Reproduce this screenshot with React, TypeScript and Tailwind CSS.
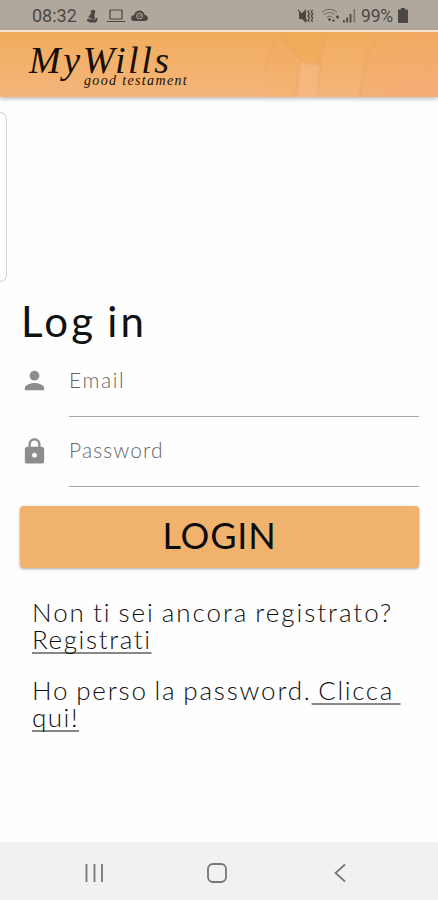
import React from 'react';
import { MdPerson, MdLock } from 'react-icons/md';

const App: React.FC = () => (
  <div className="w-full h-[900px] flex flex-col overflow-hidden bg-[#fefefe] font-['Lato','Open_Sans',sans-serif]">
    <StatusBar />
    <Header />

    <main className="flex-1 flex flex-col">
      {/* Edge panel handle */}
      <div className="mt-[15px] h-[170px] w-[7px] shrink-0 rounded-r-[7px] border border-l-0 border-[#d2d2d2]" />

      <form className="px-5 flex flex-col" onSubmit={(e) => e.preventDefault()}>
        <h1 className="mt-[14px] h-[66px] pl-px text-[42px] leading-[50px] tracking-[3.2px] [word-spacing:-3px] text-[#111] whitespace-nowrap">Log in</h1>

        <Field icon={<MdPerson size={29} />} label="Email" type="email" spacing="placeholder:tracking-[1.6px]" />
        <Field icon={<MdLock size={29} />} label="Password" type="password" spacing="placeholder:tracking-[1.1px]" />

        <button className="mt-[3px] mr-[-1px] h-[62px] rounded-[4px] bg-[#f1b26e] pb-[4px] text-[36px] leading-[58px] tracking-[0.8px] text-[#0c0c0c] shadow-[0_1px_3px_rgba(0,0,0,0.35)]">
          LOGIN
        </button>
      </form>

      <div className="pl-8 pt-[31px] font-light text-[26px] leading-[26.5px] text-[#111] [word-spacing:-2px] whitespace-nowrap">
        <p>
          <span className="tracking-[1.95px]">Non ti sei ancora registrato?</span>
          <br />
          <Link><span className="tracking-[1.6px]">Registrati</span></Link>
        </p>
        <p className="mt-[25px]">
          <span className="tracking-[1.8px]">Ho perso la password.</span>
          <Link><span className="tracking-[1.6px]">&nbsp;Clicca&nbsp;</span></Link>
          <br />
          <Link><span className="tracking-[1.5px]">qui!</span></Link>
        </p>
      </div>
    </main>

    <NavBar />
  </div>
);

const StatusBar: React.FC = () => (
  <div className="h-[30px] shrink-0 flex items-center bg-[#b0a89d] pl-8 pr-[30px] text-[#4b4743] font-['Roboto',sans-serif]">
    <span className="w-[45px] text-[18px] leading-[30px] pt-0.5">08:32</span>
    <svg className="ml-[9px] mt-0.5" width="13" height="15" viewBox="0 0 13 15" fill="currentColor">
      <circle cx="7" cy="3" r="2.3" />
      <path d="M5 4.5h3.500v3.500l1 1.500 2-1v3l-2 2H4l-3-1.500v-1.500l3-.5-2-1.500z" />
      <path d="M3 8.500l3 2M7.500 10.500l2-1" stroke="#b0a89d" strokeWidth="0.9" />
    </svg>
    <svg className="ml-2 mt-0.5" width="18" height="14" viewBox="0 0 18 14" fill="none" stroke="currentColor" strokeWidth="1.2">
      <path d="M3 1h12v9H3zM0 12.5h18" />
    </svg>
    <svg className="ml-[6px] mt-0.5" width="17" height="12" viewBox="0 0 17 12" fill="currentColor">
      <path d="M3.2 5C3.8 2 6 .5 8.5.5S13.2 2 13.7 5C15.5 5.2 17 6.4 17 8.2 17 10 15.5 11 14 11H3C1.4 11 0 10 0 8.2 0 6.5 1.4 5.2 3.2 5z" />
      <circle cx="8.5" cy="6" r="2.9" fill="none" stroke="#b0a89d" />
      <path d="M7 5.5l1.4 1.2L10.5 4" fill="none" stroke="#b0a89d" strokeWidth="0.8" />
    </svg>

    <div className="ml-auto flex items-center">
      <svg className="mt-px mr-[2px]" width="16" height="16" viewBox="0 0 16 16" fill="currentColor">
        <path d="M1 5h3l4-4v14l-4-4H1z" />
        <path d="M0 2l9 11" stroke="currentColor" strokeWidth="1.4" />
        <path d="M11.2 2l-1.3 2 1.6 2-1.6 2 1.6 2-1.3 2 1 2M14.5 2l-1.3 2 1.6 2-1.6 2 1.6 2-1.3 2 1 2" fill="none" stroke="currentColor" strokeWidth="1.3" />
      </svg>
      <svg className="ml-[5px] mt-px" width="19" height="15" viewBox="0 0 19 15" fill="none" stroke="currentColor">
        <g strokeWidth="0.9" opacity="0.75">
          <path d="M1 4.5C5 .3 12 .3 16 4.5M3 7c3-3.2 8-3.2 11 0M5.5 9.5c2-1.8 4-1.8 6 0" />
        </g>
        <circle cx="8.5" cy="11.5" r="0.9" fill="currentColor" />
        <path d="M11 12l1.500 1.700L14 12zM15 9l1.500-1.700L18 9l-1.500 1.700z" fill="currentColor" strokeWidth="0.5" />
      </svg>
      <svg className="ml-[3px] mt-px" width="13" height="15" viewBox="0 0 13 15" fill="currentColor">
        <path d="M0 12h1.800v2.500H0zM3.300 9.500h1.800v5H3.300zM6.600 6h1.800v8.500H6.600z" />
        <path d="M10.5 1h1.600v13.500h-1.600z" opacity="0.55" />
      </svg>
      <span className="ml-[5px] pt-0.5 w-[34px] text-[17.5px] leading-[28px] tracking-[-0.2px] whitespace-nowrap">99%</span>
      <svg className="ml-[3px] mt-px" width="10" height="15" viewBox="0 0 10 15" fill="currentColor">
        <path d="M3 0h4v1.500h2.300l.7.700V14.300l-.7.700H.7l-.7-.7V2.200l.7-.7H3z" />
      </svg>
    </div>
  </div>
);

const Header: React.FC = () => (
  <header className="relative h-[67px] shrink-0 border-t-2 border-[#f3e3d0] bg-linear-to-b from-[#f1ac5c] to-[#f4b57b] shadow-[0_2px_4px_rgba(0,0,0,0.25)]">
    {/* Faint figures in the banner */}
    <svg className="absolute right-0 top-0" width="178" height="65" viewBox="0 0 178 65">
      <defs>
        <linearGradient id="glow" x1="0" y1="0" x2="1" y2="1">
          <stop offset="0" stopColor="#f3a860" stopOpacity="0.2" />
          <stop offset="1" stopColor="#f5a777" stopOpacity="0.6" />
        </linearGradient>
        <filter id="soft">
          <feGaussianBlur stdDeviation="1.2" />
        </filter>
      </defs>
      <g filter="url(#soft)">
        <path d="M16 0L2 67h33l4-35L20 5z" fill="#f3a45d" opacity="0.15" />
        <path d="M20 3l22 25 17 4 9-34H20z" fill="#f0aa4e" opacity="0.4" />
        <path d="M41 31l19 2-3 34H36z" fill="#f6bb86" opacity="0.6" />
        <path d="M122 -2L106 24l-8 43h82V-2z" fill="url(#glow)" />
        <path d="M17 5L9 25 5 40M21 4l19 24-4 37M40 28l12 4 7-1 8-30M60 32l-3 33M120 2L107 24l-8 41" fill="none" stroke="#ee995a" strokeWidth="1.8" opacity="0.45" />
      </g>
    </svg>
    <div className="relative pl-[29px] pt-[6px] text-[#17110a] italic font-['Liberation_Serif',serif] whitespace-nowrap">
      <div className="h-[36px] text-[38px] leading-[44px] tracking-[2.6px]">MyWills</div>
      <div className="pl-[55px] text-[14px] leading-[14px] tracking-[1.35px]">good testament</div>
    </div>
  </header>
);

const Field: React.FC<{ icon: React.ReactNode, label: string, type: string, spacing: string }> = ({ icon, label, type, spacing }) => (
  <label className="flex h-[70.5px] items-start">
    <span className="w-[49px] shrink-0 pt-[4px] text-[#8d8d8d]">{icon}</span>
    <span className="flex-1 min-w-0 mr-[-1px] h-[54.5px] border-b border-[#a8a8a8]">
      <input
        type={type}
        placeholder={label}
        className={`block h-[34px] w-full bg-transparent font-light text-[21px] outline-none placeholder:text-[#666] ${spacing}`}
      />
    </span>
  </label>
);

const Link: React.FC<{ children: React.ReactNode }> = ({ children }) => (
  <a href="#" className="underline decoration-[#888] decoration-[1.5px] underline-offset-[3px] [text-decoration-skip-ink:none]">{children}</a>
);

const NavBar: React.FC = () => (
  <nav className="h-[58px] shrink-0 bg-[#f1f1f1] text-[#777]">
    <div className="flex h-full items-center pl-[85px] pt-[3px]">
      <svg width="19" height="20" viewBox="0 0 19 20" stroke="currentColor" strokeWidth="1.8">
        <path d="M1.5 1v18M9.5 1v18M17 1v18" />
      </svg>
      <svg className="ml-[102px]" width="22" height="22" viewBox="0 0 22 22" fill="none" stroke="currentColor" strokeWidth="1.8">
        <rect x="2" y="2" width="18" height="18" rx="5" />
      </svg>
      <svg className="ml-[105px]" width="14" height="20" viewBox="0 0 14 20" fill="none" stroke="currentColor" strokeWidth="1.8">
        <path d="M12 1.500L2.500 10l9.500 8.500" />
      </svg>
    </div>
  </nav>
);

export default App;
